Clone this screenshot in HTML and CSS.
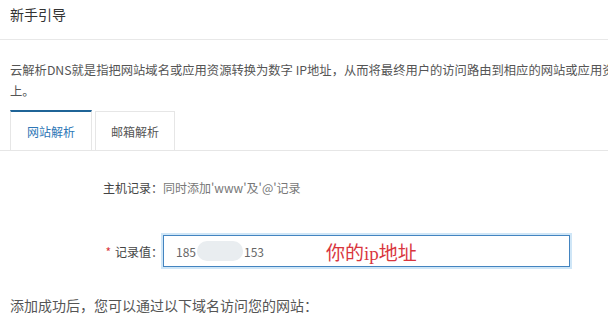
FILE: index.html
```html
<!DOCTYPE html>
<html lang="zh-CN">
<head>
<meta charset="utf-8">
<title>新手引导</title>
<link rel="stylesheet" href="styles.css">
</head>
<body>
<div class="page">
  <div class="header"><span class="title">新手引导</span></div>
  <div class="content">
    <p class="intro">云解析DNS就是指把网站域名或应用资源转换为数字 IP地址，从而将最终用户的访问路由到相应的网站或应用资源<br>上。</p>
    <div class="tabs">
      <div class="tab active">网站解析</div>
      <div class="tab">邮箱解析</div>
    </div>
    <div class="form">
      <div class="row">
        <label class="label">主机记录：</label>
        <span class="value">同时添加'www'及'@'记录</span>
      </div>
      <div class="row row-input">
        <label class="label"><span class="req">*</span>记录值：</label>
        <div class="input">
          <span class="ip">185</span><span class="blur"></span><span class="ip">153</span><span class="note">你的ip地址</span>
        </div>
      </div>
    </div>
    <p class="after">添加成功后，您可以通过以下域名访问您的网站：</p>
  </div>
</div>
</body>
</html>
```

FILE: styles.css
```css
html, body {
  margin: 0;
  padding: 0;
  background: #fff;
  overflow: hidden;
}
body {
  font-family: "Noto Sans CJK SC", "Noto Sans", sans-serif;
  color: #333;
}
.page {
  width: 628px;
}
.header {
  height: 40px;
  padding: 5px 10px 0;
  box-sizing: border-box;
  border-bottom: 1px solid #e8e8e8;
}
.title {
  font-size: 14px;
  line-height: 18px;
  color: #333;
  display: block;
}
.content {
  padding: 0 10px;
}
.intro {
  margin: 20px 0 0;
  font-size: 12.3px;
  line-height: 21px;
  color: #555;
  white-space: nowrap;
}
.tabs {
  display: flex;
  gap: 3px;
  margin-top: 8px;
  border-bottom: 1px solid #e6e6e6;
  margin-left: -10px;
  margin-right: -10px;
  padding-left: 10px;
}
.tab {
  box-sizing: border-box;
  height: 39px;
  width: 80px;
  border: 1px solid #e6e6e6;
  border-bottom: none;
  text-align: center;
  font-size: 12px;
  line-height: 36px;
  padding-top: 2px;
  color: #555;
  margin-top: 1px;
}
.tab.active {
  width: 82px;
  margin-top: 0;
  height: 40px;
  border-top: 2px solid #1f6497;
  color: #2e77b6;
  background: #fff;
  margin-bottom: -1px;
}
.form {
  margin-top: 20px;
}
.row {
  display: flex;
  align-items: center;
  height: 32px;
}
.row-input {
  margin-top: 32px;
}
.label {
  width: 153px;
  text-align: right;
  font-size: 12px;
  color: #444;
  flex: none;
}
.req {
  color: #d9363e;
  margin-right: 4px;
}
.value {
  font-size: 12px;
  color: #777;
}
.input {
  box-sizing: border-box;
  width: 407px;
  height: 32px;
  border: 1px solid #4384c0;
  box-shadow: 0 0 0 2px #cfe6f7;
  display: flex;
  align-items: center;
  padding-left: 12px;
  font-size: 12px;
  color: #666;
}
.blur {
  display: inline-block;
  width: 46px;
  height: 20px;
  border-radius: 10px;
  background: #e9edf0;
  margin: 0 1px;
}
.note {
  margin-left: 62px;
  font-family: "Liberation Serif", "Noto Sans CJK SC", serif;
  font-size: 19px;
  color: #d9363e;
}
.after {
  margin: 28px 0 0;
  font-size: 14px;
  line-height: 20px;
  color: #555;
}
```
